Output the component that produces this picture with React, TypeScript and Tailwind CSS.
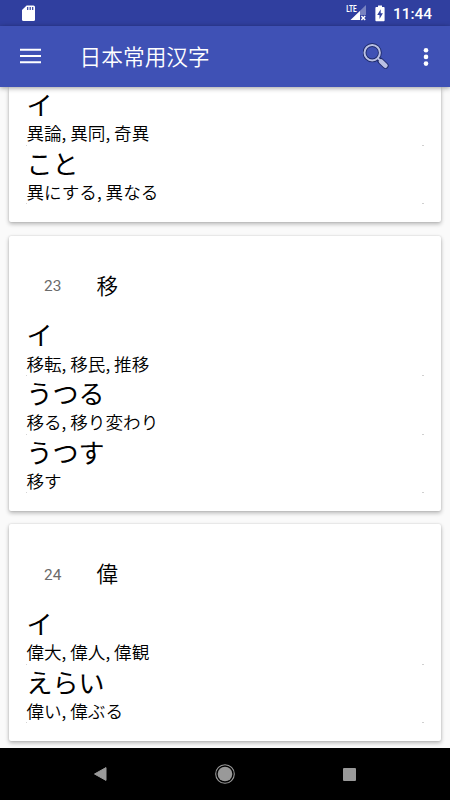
interface Reading {
  kana: string
  words: string
}

interface Kanji {
  index: number
  char: string
  readings: Reading[]
}

const KANJI: Kanji[] = [
  {
    index: 23,
    char: '移',
    readings: [
      { kana: 'イ', words: '移転, 移民, 推移' },
      { kana: 'うつる', words: '移る, 移り変わり' },
      { kana: 'うつす', words: '移す' },
    ],
  },
  {
    index: 24,
    char: '偉',
    readings: [
      { kana: 'イ', words: '偉大, 偉人, 偉観' },
      { kana: 'えらい', words: '偉い, 偉ぶる' },
    ],
  },
]

// the card above is scrolled under the toolbar, only its readings are visible
const SCROLLED: Reading[] = [
  { kana: 'イ', words: '異論, 異同, 奇異' },
  { kana: 'こと', words: '異にする, 異なる' },
]

function StatusBar() {
  return (
    <div className="h-[26px] shrink-0 bg-[#303f9f] flex items-center text-white">
      <svg className="ml-[22px]" width="13" height="17" viewBox="0 0 13 17">
        <path d="M4.6 0.5H11.5Q13 0.5 13 2V14.5Q13 16 11.5 16H1.5Q0 16 0 14.5V5Z" fill="#fff" />
        <path d="M5.7 2V5M8.2 2V5M10.7 2V5" stroke="#303f9f" strokeWidth="1.2" />
      </svg>
      <div className="flex-1" />
      <svg width="21" height="18" viewBox="0 0 21 18">
        <path d="M20 1V11H14V16H4.5Z" fill="#fff" fillOpacity="0.35" />
        <path d="M14 7V16H4.5Z" fill="#fff" />
        <path d="M15.4 12L19.2 16M19.2 12L15.4 16" stroke="#fff" strokeWidth="1.4" />
        <text x="0.2" y="8" fill="#fff" fontFamily="Roboto, sans-serif" fontSize="9.5" fontWeight="700" textLength="10.4" lengthAdjust="spacingAndGlyphs">LTE</text>
      </svg>
      <svg className="ml-[8px]" width="10" height="17" viewBox="0 0 10 17">
        <path d="M3 0.5H7V2H8.8Q9.6 2 9.6 3V15.2Q9.6 16.2 8.8 16.2H1.2Q0.4 16.2 0.4 15.2V3Q0.4 2 1.2 2H3Z" fill="#fff" />
        <path d="M5.7 4.2L2.2 10H4.5V14L7.9 8.3H5.7Z" fill="#303f9f" />
      </svg>
      <span className="ml-[8px] mr-[18px] mt-[2px] font-['Roboto',sans-serif] font-medium text-[15.4px] leading-[18px]">11:44</span>
    </div>
  )
}

function Toolbar() {
  return (
    <header className="relative z-10 h-[61px] shrink-0 bg-[#3f51b5] shadow-[0_1px_5px_rgba(0,0,0,0.4)] flex items-center">
      <svg className="ml-5 mb-[1px]" width="21" height="16" viewBox="0 0 21 16">
        <path d="M0 1.8H21M0 8H21M0 14.2H21" stroke="#fff" strokeWidth="2.1" />
      </svg>
      <h1 className="ml-[38.6px] mb-[2px] flex-1 text-white font-['Noto_Sans_CJK_SC',sans-serif] font-[350] text-[21.7px] leading-[32px]">日本常用汉字</h1>
      <svg width="26" height="27" viewBox="0 0 26 27">
        <path d="M17.3 17.8L22.5 22.8" stroke="#1f2b6b" strokeWidth="6.2" strokeLinecap="round" />
        <path d="M14.5 15L18 18.5" stroke="#1f2b6b" strokeWidth="3.4" />
        <circle cx="9.2" cy="9.7" r="7.7" fill="none" stroke="#1f2b6b" strokeWidth="3.8" />
        <circle cx="9.2" cy="9.7" r="7.7" fill="none" stroke="#b9c0e4" strokeWidth="2" />
        <path d="M14.8 15.2L18 18.4" stroke="#b9c0e4" strokeWidth="1.8" />
        <path d="M18 18.4L22.4 22.7" stroke="#b9c0e4" strokeWidth="4.6" strokeLinecap="round" />
      </svg>
      <svg className="ml-[34px] mr-[21px]" width="6" height="20" viewBox="0 0 6 20">
        <circle cx="3" cy="3.2" r="2.3" fill="#fff" />
        <circle cx="3" cy="9.9" r="2.3" fill="#fff" />
        <circle cx="3" cy="16.6" r="2.3" fill="#fff" />
      </svg>
    </header>
  )
}

function ReadingRow({ kana, words }: Reading) {
  return (
    <div className="relative h-[58.7px] text-black font-['Noto_Sans_CJK_JP',sans-serif]">
      <p className="-ml-[0.6px] text-[26px] leading-[33px]">{kana}</p>
      <p className="-ml-[0.6px] mt-[0.4px] text-[17.6px] leading-[26px] font-[350]">{words}</p>
      <span className="absolute -left-px bottom-0 size-px bg-[#d5d5d5]" />
      <span className="absolute -right-px bottom-0 w-[2px] h-px bg-[#d0d0d0]" />
    </div>
  )
}

function KanjiCard({ index, char, readings }: Kanji) {
  return (
    <section className="mx-[9px] bg-white rounded-[2px] shadow-[0_2px_4px_rgba(0,0,0,0.28),0_0_2px_rgba(0,0,0,0.14)] px-[18px] pb-[17.6px]">
      <div className="h-[81.6px] pt-[18.4px] flex items-center">
        <span className="ml-[17px] mt-[2px] w-[52.6px] font-['Roboto',sans-serif] text-[15.4px] text-[#6b6b6b]">{index}</span>
        <span className="mb-[2px] font-['Noto_Sans_CJK_JP',sans-serif] font-[350] text-[21.6px] leading-[30px] text-black">{char}</span>
      </div>
      {readings.map((r) => (
        <ReadingRow key={r.kana} {...r} />
      ))}
    </section>
  )
}

function NavBar() {
  return (
    <nav className="relative z-10 h-[52px] shrink-0 bg-black flex items-center justify-between pl-[93px] pr-[94px]">
      <svg width="14" height="16" viewBox="0 0 14 16">
        <path d="M13 1.6V14.4L1.5 8Z" fill="#999" stroke="#999" strokeLinejoin="round" />
      </svg>
      <svg width="20" height="22" viewBox="0 0 20 22">
        <circle cx="10" cy="11" r="9.3" fill="none" stroke="#999" strokeWidth="1.1" />
        <circle cx="10" cy="11" r="7.3" fill="#999" />
      </svg>
      <div className="size-[13px] rounded-[1px] bg-[#999]" />
    </nav>
  )
}

export default function App() {
  return (
    <div className="w-[450px] h-[800px] overflow-hidden flex flex-col bg-[#fafafa]">
      <StatusBar />
      <Toolbar />
      <main className="flex-1 min-h-0 flex flex-col gap-[13.5px]">
        <section className="mx-[9px] bg-white rounded-b-[2px] shadow-[0_2px_4px_rgba(0,0,0,0.28),0_0_2px_rgba(0,0,0,0.14)] px-[18px] pb-[17.7px]">
          {SCROLLED.map((r) => (
            <ReadingRow key={r.kana} {...r} />
          ))}
        </section>
        {KANJI.map((k) => (
          <KanjiCard key={k.index} {...k} />
        ))}
      </main>
      <NavBar />
    </div>
  )
}
